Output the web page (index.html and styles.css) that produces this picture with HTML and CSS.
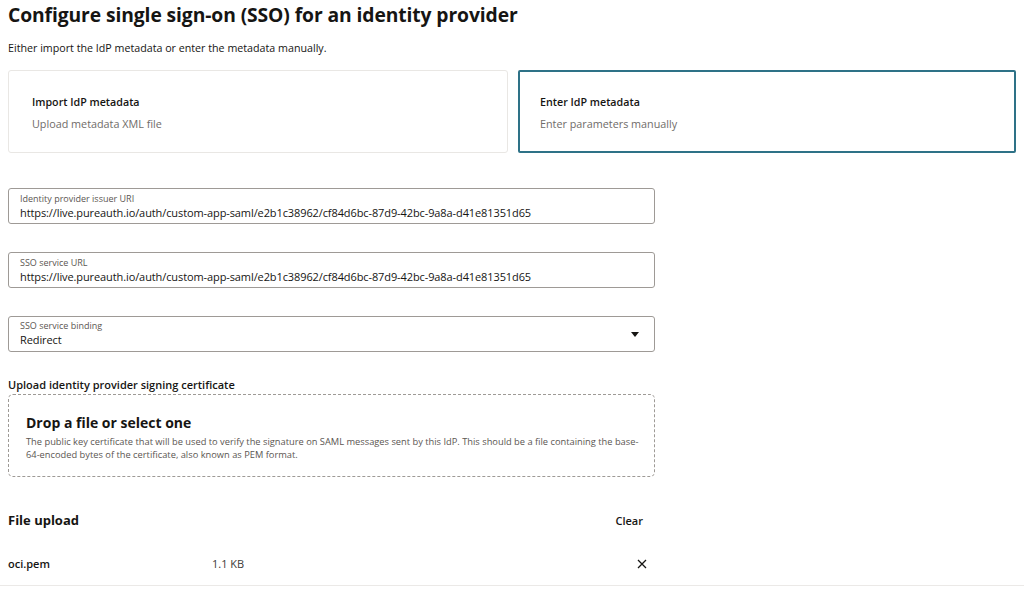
FILE: index.html
```html
<!DOCTYPE html>
<html lang="en">
<head>
<meta charset="utf-8">
<title>Configure SSO</title>
<link rel="stylesheet" href="styles.css">
</head>
<body>
<main class="page">
  <h1 class="title">Configure single sign-on (SSO) for an identity provider</h1>
  <p class="intro">Either import the IdP metadata or enter the metadata manually.</p>

  <div class="choices">
    <div class="choice">
      <div class="choice-title">Import IdP metadata</div>
      <div class="choice-sub">Upload metadata XML file</div>
    </div>
    <div class="choice selected">
      <div class="choice-title">Enter IdP metadata</div>
      <div class="choice-sub">Enter parameters manually</div>
    </div>
  </div>

  <div class="form">
    <div class="field">
      <div class="field-label">Identity provider issuer URI</div>
      <div class="field-value">https://live.pureauth.io/auth/custom-app-saml/e2b1c38962/cf84d6bc-87d9-42bc-9a8a-d41e81351d65</div>
    </div>
    <div class="field">
      <div class="field-label">SSO service URL</div>
      <div class="field-value">https://live.pureauth.io/auth/custom-app-saml/e2b1c38962/cf84d6bc-87d9-42bc-9a8a-d41e81351d65</div>
    </div>
    <div class="field select">
      <div class="field-text">
        <div class="field-label">SSO service binding</div>
        <div class="field-value">Redirect</div>
      </div>
      <svg class="caret" width="8" height="5" viewBox="0 0 8 5"><path d="M0 0h8L4 5z" fill="#161513"/></svg>
    </div>

    <div class="upload">
      <div class="upload-label">Upload identity provider signing certificate</div>
      <div class="dropzone">
        <div class="drop-title">Drop a file or select one</div>
        <div class="drop-desc">The public key certificate that will be used to verify the signature on SAML messages sent by this IdP. This should be a file containing the base-64-encoded bytes of the certificate, also known as PEM format.</div>
      </div>
    </div>

    <div class="files-head">
      <div class="files-title">File upload</div>
      <div class="clear">Clear</div>
    </div>
  </div>
  <div class="file-row">
    <div class="file-inner">
      <div class="file-name">oci.pem</div>
      <div class="file-size">1.1 KB</div>
      <svg class="remove" width="10" height="10" viewBox="0 0 10 10"><path d="M1 1l8 8M9 1l-8 8" stroke="#161513" stroke-width="1.3"/></svg>
    </div>
  </div>
</main>
</body>
</html>
```
FILE: styles.css
```css
* { box-sizing: border-box; }
html, body { margin: 0; background: #fff; }
body {
  font-family: "Open Sans", "Noto Sans", sans-serif;
  color: #161513;
  padding: 0 8px;
}
.page { display: flex; flex-direction: column; }
.title {
  margin: 0;
  padding-top: 2px;
  font-size: 19.3px;
  font-weight: 700;
  line-height: 26px;
  letter-spacing: -0.1px;
}
.intro {
  margin: 12px 0 0;
  font-size: 10.7px;
  line-height: 16px;
}
.choices {
  display: grid;
  grid-template-columns: 500px 1fr;
  gap: 10px;
  margin-top: 14px;
}
.choice {
  height: 83px;
  border: 1px solid #e9e7e4;
  border-radius: 3px;
  padding: 23px 23px 0;
}
.choice.selected {
  border: 2px solid #2e7287;
  border-radius: 2px;
  padding: 22px 20px 0;
}
.choice-title {
  font-size: 10.7px;
  font-weight: 600;
  line-height: 16px;
}
.choice-sub {
  margin-top: 6px;
  font-size: 10.8px;
  line-height: 16px;
  color: #6f6c69;
}
.form {
  width: 647px;
  display: flex;
  flex-direction: column;
}
.field {
  margin-top: 35px;
  height: 36px;
  border: 1px solid #9e9a96;
  border-radius: 3px;
  padding: 4px 11px 0;
}
.form .field + .field { margin-top: 28px; }
.field.select {
  display: flex;
  align-items: center;
  justify-content: space-between;
  padding: 0 15px 0 11px;
}
.field-label {
  font-size: 9px;
  line-height: 12px;
  color: #5b5652;
}
.field-value {
  font-size: 11px;
  line-height: 16px;
  white-space: nowrap;
  letter-spacing: -0.1px;
}
.upload { margin-top: 25px; }
.upload-label {
  font-size: 11px;
  font-weight: 600;
  line-height: 16px;
}
.dropzone {
  margin-top: 1px;
  height: 83px;
  border: 1px dashed #9e9a96;
  border-radius: 5px;
  padding: 18px 9px 0 17px;
}
.drop-title {
  font-size: 14px;
  font-weight: 700;
  line-height: 20px;
}
.drop-desc {
  margin-top: 2px;
  font-size: 9.3px;
  line-height: 13px;
  color: #5b5652;
}
.files-head {
  margin-top: 33px;
  display: flex;
  justify-content: space-between;
  align-items: center;
  padding-right: 12px;
}
.files-title {
  font-size: 13px;
  font-weight: 700;
  line-height: 20px;
}
.clear {
  font-size: 11px;
  font-weight: 600;
}
.file-row {
  margin: 15px -8px 0;
  padding: 0 8px;
  height: 41px;
  border-bottom: 1px solid #ebe9e7;
}
.file-inner {
  width: 647px;
  height: 40px;
  display: flex;
  align-items: center;
  padding-right: 8px;
  padding-bottom: 3px;
}
.file-name {
  width: 204px;
  font-size: 11px;
  font-weight: 600;
}
.file-size {
  flex: 1;
  font-size: 11px;
  color: #403c39;
}
```
